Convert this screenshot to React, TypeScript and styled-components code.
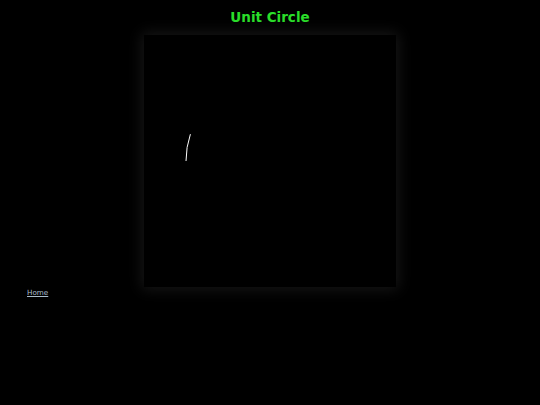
import React from "react";
import styled, { createGlobalStyle } from "styled-components";

const GlobalStyle = createGlobalStyle`
  html, body {
    margin: 0;
    padding: 0;
    background: #000;
  }
  body {
    font-family: "DejaVu Sans", "Liberation Sans", sans-serif;
  }
`;

const SIZE = 252;
const R = 84;
// arc from the left of the circle, a little way up
const END_ANGLE = 0.325;

const Page = styled.div`
  min-height: 405px;
  background: #000;
  display: flex;
  flex-direction: column;
`;

const Title = styled.h1`
  margin: 8px 0 9px;
  font-size: 13.5px;
  line-height: 18px;
  font-weight: bold;
  text-align: center;
  color: #2be02b;
`;

const Board = styled.div`
  width: ${SIZE}px;
  height: ${SIZE}px;
  margin: 0 auto;
  background: #000;
  box-shadow: 0 0 14px 2px rgba(40, 40, 40, 0.6);
`;

const Footer = styled.div`
  padding-left: 27px;
  line-height: 10px;
  margin-top: -2px;
`;

const HomeLink = styled.a`
  font-size: 7.2px;
  color: #a9bccb;
  text-decoration: underline;
`;

const App: React.FC = () => {
  const cx = SIZE / 2;
  const cy = SIZE / 2;
  const sx = cx - R;
  const sy = cy;
  const ex = cx - R * Math.cos(END_ANGLE);
  const ey = cy - R * Math.sin(END_ANGLE);

  return (
    <Page>
      <GlobalStyle />
      <Title>Unit Circle</Title>
      <Board>
        <svg width={SIZE} height={SIZE} viewBox={`0 0 ${SIZE} ${SIZE}`}>
          <path
            d={`M ${sx} ${sy} A ${R} ${R} 0 0 1 ${ex} ${ey}`}
            fill="none"
            stroke="#ffffff"
            strokeWidth={1}
          />
        </svg>
      </Board>
      <Footer>
        <HomeLink href="#">Home</HomeLink>
      </Footer>
    </Page>
  );
};

export default App;
